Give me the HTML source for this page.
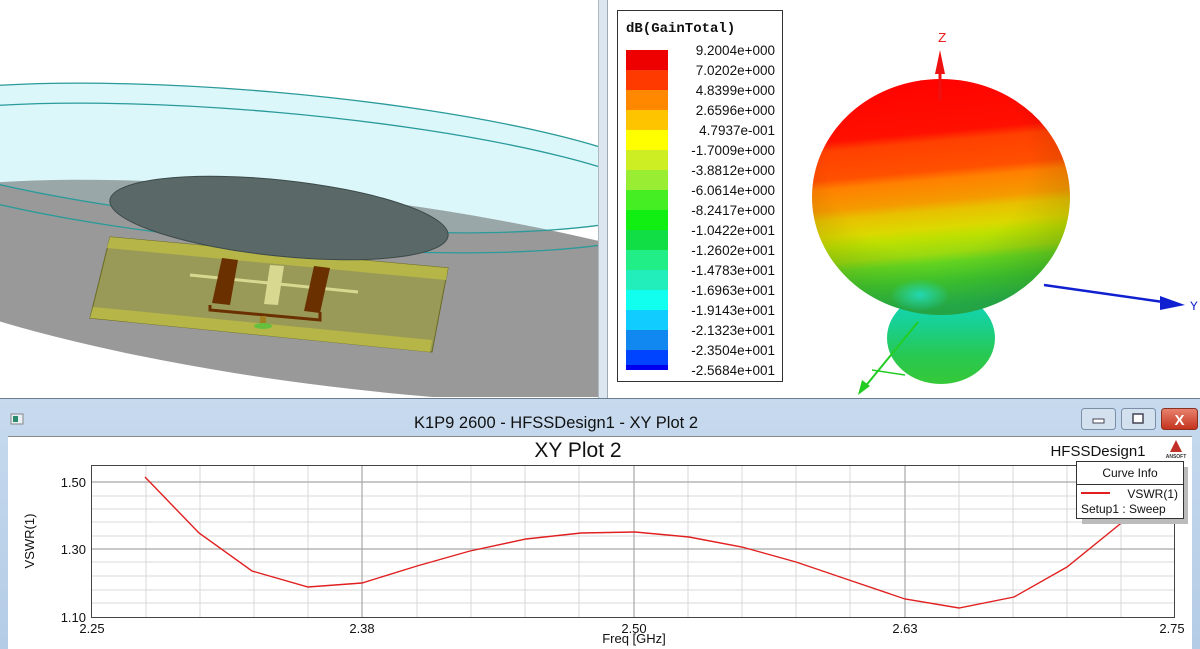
<!DOCTYPE html>
<html><head><meta charset="utf-8"><style>
html,body{margin:0;padding:0;background:#fff;width:1200px;height:649px;overflow:hidden}
svg text{font-family:"Liberation Sans",sans-serif}
.m{font-family:"Liberation Mono",monospace}
</style></head><body>
<svg width="1200" height="649" viewBox="0 0 1200 649" xmlns="http://www.w3.org/2000/svg">
<defs>
<linearGradient id="sph" x1="0" y1="0" x2="0.1" y2="1">
<stop offset="0" stop-color="#ff0000"/><stop offset="0.27" stop-color="#ff1000"/>
<stop offset="0.31" stop-color="#ff4000"/><stop offset="0.43" stop-color="#ff5000"/>
<stop offset="0.47" stop-color="#ff8000"/><stop offset="0.56" stop-color="#f59a00"/>
<stop offset="0.60" stop-color="#e8c000"/><stop offset="0.67" stop-color="#dcd800"/>
<stop offset="0.71" stop-color="#bfe000"/><stop offset="0.78" stop-color="#9ada10"/>
<stop offset="0.82" stop-color="#66d820"/><stop offset="0.9" stop-color="#40cc30"/>
<stop offset="1" stop-color="#2ac050"/>
</linearGradient>
<radialGradient id="shade" cx="0.45" cy="0.35" r="0.65">
<stop offset="0.6" stop-color="#000" stop-opacity="0"/>
<stop offset="1" stop-color="#000" stop-opacity="0.15"/>
</radialGradient>
<radialGradient id="cy" cx="0.5" cy="0.5" r="0.5">
<stop offset="0" stop-color="#20e0d0" stop-opacity="0.8"/>
<stop offset="1" stop-color="#20e0d0" stop-opacity="0"/>
</radialGradient>
<linearGradient id="lobe" x1="0" y1="0" x2="0" y2="1">
<stop offset="0" stop-color="#10d8c8"/><stop offset="0.35" stop-color="#18d090"/>
<stop offset="0.7" stop-color="#28c850"/><stop offset="1" stop-color="#36c838"/>
</linearGradient>
<linearGradient id="tb" x1="0" y1="0" x2="0" y2="1">
<stop offset="0" stop-color="#c7daee"/><stop offset="1" stop-color="#b4cce6"/>
</linearGradient>
<linearGradient id="cls" x1="0" y1="0" x2="0" y2="1">
<stop offset="0" stop-color="#e8836f"/><stop offset="1" stop-color="#c4321c"/>
</linearGradient>
<clipPath id="left"><rect x="0" y="0" width="598" height="397"/></clipPath>
</defs>

<!-- LEFT 3D VIEW -->
<g clip-path="url(#left)">
<rect x="0" y="0" width="598" height="397" fill="#fff"/>
<ellipse cx="270" cy="158" rx="410" ry="66" transform="rotate(5 270 158)" fill="#e8fbfd"/>
<ellipse cx="340" cy="292" rx="500" ry="95" transform="rotate(7 340 292)" fill="#999999"/>
<ellipse cx="270" cy="158" rx="410" ry="66" transform="rotate(5 270 158)" fill="#9fe8f0" fill-opacity="0.18"/>
<ellipse cx="270" cy="158" rx="410" ry="66" transform="rotate(5 270 158)" fill="none" stroke="#2a9a9a" stroke-width="1.3"/>
<ellipse cx="270" cy="178" rx="410" ry="66" transform="rotate(5 270 178)" fill="none" stroke="#2a9a9a" stroke-width="1.3"/>
<polygon points="110,237 448,268 432,352 90,318" fill="#9a9a58" stroke="#6a6a20"/>
<polygon points="110,237 448,268 446,280 107,248" fill="#b5b548"/>
<polygon points="93,307 432,340 430,352 90,318" fill="#b5b548"/>
<ellipse cx="279" cy="218" rx="170" ry="38" transform="rotate(6 279 218)" fill="#5a6868" stroke="#3d4a4a"/>
<line x1="190" y1="275" x2="358" y2="292" stroke="#d8d890" stroke-width="3"/>
<polygon points="270,265 284,266 278,305 264,304" fill="#d8d890"/>
<polygon points="222,258 238,260 230,305 212,303" fill="#6a3000"/>
<polygon points="314,266 330,268 320,313 304,311" fill="#6a3000"/>
<polyline points="210,305 210,310 320,320 320,312" fill="none" stroke="#6a3000" stroke-width="3"/>
<rect x="260" y="316" width="6" height="10" fill="#a08020"/>
<ellipse cx="263" cy="326" rx="9" ry="3" fill="#66c040"/>
</g>
<rect x="598" y="0" width="10" height="398" fill="#dce6f0"/>
<line x1="598.5" y1="0" x2="598.5" y2="398" stroke="#b0b8c0"/>
<line x1="607.5" y1="0" x2="607.5" y2="398" stroke="#a0a8b0"/>

<!-- RIGHT 3D VIEW -->
<rect x="608" y="0" width="592" height="398" fill="#fff"/>
<ellipse cx="941" cy="338" rx="54" ry="46" fill="url(#lobe)"/>
<ellipse cx="941" cy="197" rx="129" ry="118" fill="url(#sph)"/>
<ellipse cx="941" cy="197" rx="129" ry="118" fill="url(#shade)"/>
<ellipse cx="920" cy="295" rx="30" ry="16" fill="url(#cy)"/>
<line x1="940" y1="100" x2="940" y2="60" stroke="#ee1111" stroke-width="3"/>
<polygon points="935,74 940,50 945,74" fill="#ee1111"/>
<text x="938" y="42" fill="#ee2222" font-size="14" class="m">Z</text>
<line x1="1044" y1="285" x2="1170" y2="303" stroke="#1020d0" stroke-width="2.5"/>
<polygon points="1160,296 1185,305 1160,310" fill="#1020d0"/>
<text x="1190" y="310" fill="#1020d0" font-size="13" class="m">Y</text>
<line x1="918" y1="322" x2="864" y2="388" stroke="#22cc22" stroke-width="2"/>
<line x1="872" y1="370" x2="905" y2="375" stroke="#22cc22" stroke-width="1.5"/>
<polygon points="858,395 862,380 870,386" fill="#22cc22"/>

<!-- legend -->
<rect x="617.5" y="10.5" width="165" height="371" fill="#fff" stroke="#333"/>
<text x="626" y="32" font-size="14" font-weight="bold" class="m" fill="#111">dB(GainTotal)</text>
<g>
<rect x="626" y="50" width="42" height="20" fill="#ee0000"/>
<rect x="626" y="70" width="42" height="20" fill="#ff3a00"/>
<rect x="626" y="90" width="42" height="20" fill="#ff8800"/>
<rect x="626" y="110" width="42" height="20" fill="#ffc400"/>
<rect x="626" y="130" width="42" height="20" fill="#ffff00"/>
<rect x="626" y="150" width="42" height="20" fill="#ccee22"/>
<rect x="626" y="170" width="42" height="20" fill="#99ee33"/>
<rect x="626" y="190" width="42" height="20" fill="#44ee22"/>
<rect x="626" y="210" width="42" height="20" fill="#11ee11"/>
<rect x="626" y="230" width="42" height="20" fill="#11dd44"/>
<rect x="626" y="250" width="42" height="20" fill="#22ee88"/>
<rect x="626" y="270" width="42" height="20" fill="#22eebb"/>
<rect x="626" y="290" width="42" height="20" fill="#11ffee"/>
<rect x="626" y="310" width="42" height="20" fill="#11ccff"/>
<rect x="626" y="330" width="42" height="20" fill="#1188f0"/>
<rect x="626" y="350" width="42" height="20" fill="#0044ff"/>
<rect x="626" y="365" width="42" height="5" fill="#0000ee"/>
</g>
<g font-size="13.5" class="m" fill="#111" text-anchor="end">
<text x="775" y="55">9.2004e+000</text>
<text x="775" y="75">7.0202e+000</text>
<text x="775" y="95">4.8399e+000</text>
<text x="775" y="115">2.6596e+000</text>
<text x="775" y="135">4.7937e-001</text>
<text x="775" y="155">-1.7009e+000</text>
<text x="775" y="175">-3.8812e+000</text>
<text x="775" y="195">-6.0614e+000</text>
<text x="775" y="215">-8.2417e+000</text>
<text x="775" y="235">-1.0422e+001</text>
<text x="775" y="255">-1.2602e+001</text>
<text x="775" y="275">-1.4783e+001</text>
<text x="775" y="295">-1.6963e+001</text>
<text x="775" y="315">-1.9143e+001</text>
<text x="775" y="335">-2.1323e+001</text>
<text x="775" y="355">-2.3504e+001</text>
<text x="775" y="375">-2.5684e+001</text>
</g>

<!-- BOTTOM WINDOW -->
<rect x="0" y="398" width="1200" height="251" fill="url(#tb)"/>
<line x1="0" y1="398.5" x2="1200" y2="398.5" stroke="#6a7c90"/>
<rect x="11" y="414" width="12" height="10" fill="#e8eef4" stroke="#888"/>
<rect x="13" y="416" width="5" height="6" fill="#2a8a6a"/>
<text x="556" y="428" font-size="16.5" text-anchor="middle" fill="#111">K1P9 2600 - HFSSDesign1 - XY Plot 2</text>
<rect x="1081.5" y="408.5" width="34" height="21" rx="3" fill="#d3e1ef" stroke="#7a8ea8"/>
<rect x="1093" y="419" width="11" height="4" fill="#fff" stroke="#445"/>
<rect x="1121.5" y="408.5" width="34" height="21" rx="3" fill="#d3e1ef" stroke="#7a8ea8"/>
<rect x="1133" y="414" width="10" height="9" fill="#fff" stroke="#445" stroke-width="1.5"/>
<rect x="1161.5" y="408.5" width="36" height="21" rx="3" fill="url(#cls)" stroke="#8a3020"/>
<text x="1179.5" y="425" font-size="15" font-weight="bold" fill="#fff" text-anchor="middle">X</text>

<rect x="8" y="436" width="1184" height="213" fill="#fff"/>
<line x1="8" y1="436.5" x2="1192" y2="436.5" stroke="#888"/>
<text x="578" y="457" font-size="21" text-anchor="middle" fill="#111">XY Plot 2</text>
<text x="1098" y="456" font-size="15" text-anchor="middle" fill="#111">HFSSDesign1</text>
<polygon points="1176,440 1170,452 1182,452" fill="#c03028"/>
<text x="1176" y="458" font-size="5" font-weight="bold" text-anchor="middle" fill="#333">ANSOFT</text>

<!-- grid -->
<g stroke="#d8d8d8" stroke-width="1">
<line x1="92" y1="496" x2="1175" y2="496"/><line x1="92" y1="509" x2="1175" y2="509"/>
<line x1="92" y1="522" x2="1175" y2="522"/><line x1="92" y1="536" x2="1175" y2="536"/>
<line x1="92" y1="562" x2="1175" y2="562"/><line x1="92" y1="576" x2="1175" y2="576"/>
<line x1="92" y1="590" x2="1175" y2="590"/><line x1="92" y1="603" x2="1175" y2="603"/>
<line x1="146" y1="465" x2="146" y2="618"/><line x1="200" y1="465" x2="200" y2="618"/>
<line x1="254" y1="465" x2="254" y2="618"/><line x1="308" y1="465" x2="308" y2="618"/>
<line x1="417" y1="465" x2="417" y2="618"/><line x1="471" y1="465" x2="471" y2="618"/>
<line x1="525" y1="465" x2="525" y2="618"/><line x1="579" y1="465" x2="579" y2="618"/>
<line x1="688" y1="465" x2="688" y2="618"/><line x1="742" y1="465" x2="742" y2="618"/>
<line x1="796" y1="465" x2="796" y2="618"/><line x1="850" y1="465" x2="850" y2="618"/>
<line x1="959" y1="465" x2="959" y2="618"/><line x1="1013" y1="465" x2="1013" y2="618"/>
<line x1="1067" y1="465" x2="1067" y2="618"/><line x1="1121" y1="465" x2="1121" y2="618"/>
</g>
<g stroke="#a8a8a8" stroke-width="1.2">
<line x1="92" y1="482" x2="1175" y2="482"/><line x1="92" y1="549" x2="1175" y2="549"/>
<line x1="362" y1="465" x2="362" y2="618"/><line x1="634" y1="465" x2="634" y2="618"/>
<line x1="905" y1="465" x2="905" y2="618"/>
</g>
<rect x="91.5" y="465.5" width="1083" height="152" fill="none" stroke="#444"/>
<polyline fill="none" stroke="#e02020" stroke-width="1.4" points="145,477 199,533 252,571 308,587 362,583 417,566 470,551 526,539 581,533 635,532 689,537 742,547 796,562 849,580 905,599 959,608 1014,597 1067,567 1125,520 1160,480"/>
<g font-size="13" fill="#111">
<text x="86" y="487" text-anchor="end">1.50</text>
<text x="86" y="554" text-anchor="end">1.30</text>
<text x="86" y="622" text-anchor="end">1.10</text>
<text x="92" y="633" text-anchor="middle">2.25</text>
<text x="362" y="633" text-anchor="middle">2.38</text>
<text x="634" y="633" text-anchor="middle">2.50</text>
<text x="905" y="633" text-anchor="middle">2.63</text>
<text x="1172" y="633" text-anchor="middle">2.75</text>
<text x="634" y="643" text-anchor="middle">Freq [GHz]</text>
<text transform="translate(34,541) rotate(-90)" text-anchor="middle">VSWR(1)</text>
</g>
<!-- curve info -->
<rect x="1082" y="467" width="106" height="57" fill="#bbb"/>
<rect x="1076.5" y="461.5" width="107" height="57" fill="#fff" stroke="#333"/>
<line x1="1077" y1="484.5" x2="1183" y2="484.5" stroke="#333"/>
<text x="1130" y="477" font-size="12" text-anchor="middle" fill="#111">Curve Info</text>
<line x1="1081" y1="493" x2="1110" y2="493" stroke="#e02020" stroke-width="2"/>
<text x="1178" y="498" font-size="12" text-anchor="end" fill="#111">VSWR(1)</text>
<text x="1081" y="513" font-size="12" fill="#111">Setup1 : Sweep</text>
</svg>
</body></html>
